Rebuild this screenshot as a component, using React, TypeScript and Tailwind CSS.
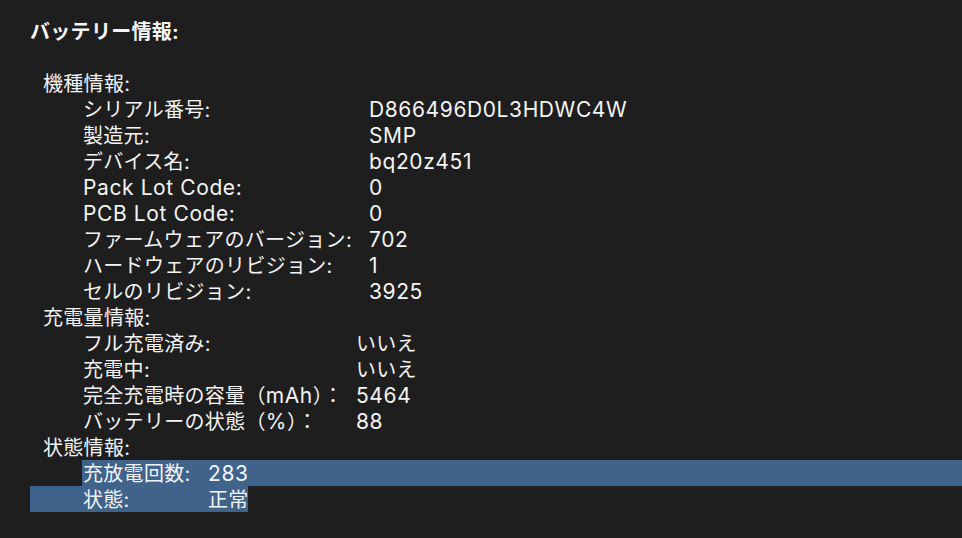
import React from 'react';

type Row = { label: React.ReactNode; value: string; key: string };

// Latin runs are set a touch larger and looser, like the system font in the shot
const L = ({ children }: { children: React.ReactNode }) => (
  <span className="text-[21px] tracking-[0.6px]">{children}</span>
);

const groups: { title: string; labelWidth: string; rows: Row[] }[] = [
  {
    title: '機種情報:',
    labelWidth: 'w-[286px]',
    rows: [
      { key: 'serial', label: 'シリアル番号:', value: 'D866496D0L3HDWC4W' },
      { key: 'maker', label: '製造元:', value: 'SMP' },
      { key: 'device', label: 'デバイス名:', value: 'bq20z451' },
      { key: 'pack', label: <L>Pack Lot Code:</L>, value: '0' },
      { key: 'pcb', label: <L>PCB Lot Code:</L>, value: '0' },
      { key: 'fw', label: 'ファームウェアのバージョン:', value: '702' },
      { key: 'hw', label: 'ハードウェアのリビジョン:', value: '1' },
      { key: 'cell', label: 'セルのリビジョン:', value: '3925' },
    ],
  },
  {
    title: '充電量情報:',
    labelWidth: 'w-[273px]',
    rows: [
      { key: 'full', label: 'フル充電済み:', value: 'いいえ' },
      { key: 'charging', label: '充電中:', value: 'いいえ' },
      {
        key: 'cap',
        label: (
          <>
            完全充電時の容量（<L>mAh</L>）：
          </>
        ),
        value: '5464',
      },
      {
        key: 'health',
        label: (
          <>
            バッテリーの状態（<L>%</L>）：
          </>
        ),
        value: '88',
      },
    ],
  },
];

const isLatin = (s: string) => /^[\x20-\x7e]+$/.test(s);

// every line of the text view is 26px tall; the glyphs sit a little low in it
const line = 'h-[26px] pt-[2px] leading-[24px] whitespace-nowrap';

export default function App() {
  return (
    <div
      className="w-[962px] h-[538px] overflow-hidden bg-[#1e1e1e] text-[#f4f4f4] text-[20px] tracking-[0.3px] pt-[18px] pl-[30px]"
      style={{ fontFamily: '"Inter", "Noto Sans CJK JP", sans-serif' }}
    >
      <div className={`${line} font-bold`}>バッテリー情報:</div>
      <div className="h-[26px]" />

      {groups.map((g) => (
        <div key={g.title}>
          <div className={`${line} pl-[13px]`}>{g.title}</div>
          {g.rows.map((r) => (
            <div key={r.key} className={`${line} flex pl-[53px]`}>
              <div className={`${g.labelWidth} shrink-0`}>{r.label}</div>
              <div>{isLatin(r.value) ? <L>{r.value}</L> : r.value}</div>
            </div>
          ))}
        </div>
      ))}

      <div className={`${line} pl-[13px]`}>状態情報:</div>
      {/* selected text */}
      <div className="pl-[52px]">
        <div className={`${line} flex bg-[#40638b] pl-px`}>
          <div className="w-[125px] shrink-0">充放電回数:</div>
          <div>
            <L>283</L>
          </div>
        </div>
      </div>
      <div className={`${line} flex w-[218px] bg-[#40638b] pl-[53px]`}>
        <div className="w-[125px] shrink-0">状態:</div>
        <div>正常</div>
      </div>
    </div>
  );
}
